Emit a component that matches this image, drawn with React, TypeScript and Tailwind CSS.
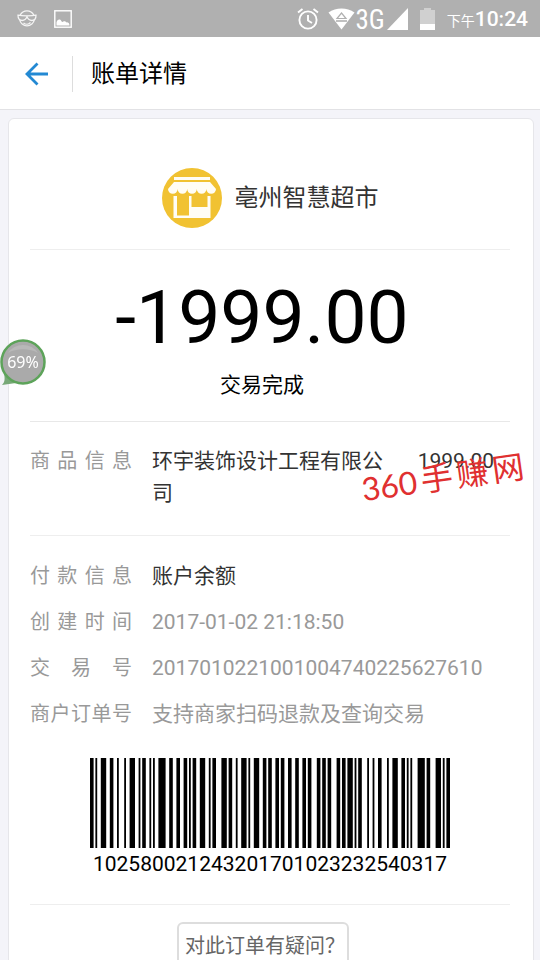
import type { ReactNode } from "react";

// Code 128 (set C) symbols: start, 15 digit pairs, checksum, stop.
// Every digit is the width of a bar or a space, in turn.
const BARCODE_SYMBOLS = [
  "211232",
  "221312",
  "321122",
  "111242",
  "222221",
  "112232",
  "112331",
  "221231",
  "123221",
  "222122",
  "222221",
  "232121",
  "232121",
  "311123",
  "121223",
  "123221",
  "111341",
  "2331112",
];

type DetailRowProps = {
  label: string;
  children: ReactNode;
  strong?: boolean;
};

function DetailRow({ label, children, strong = false }: DetailRowProps) {
  return (
    <div className="flex gap-5 text-[21px] leading-8">
      <dt className="w-[102px] shrink-0 text-xl leading-8 text-[#999999] [text-align-last:justify]">{label}</dt>
      <dd className={`flex min-w-0 flex-1 ${strong ? "text-[#333333]" : "text-[#999999]"}`}>{children}</dd>
    </div>
  );
}

function Barcode() {
  let x = 0;
  const bars: { x: number; width: number }[] = [];
  BARCODE_SYMBOLS.join("")
    .split("")
    .forEach((digit, i) => {
      const width = Number(digit);
      if (i % 2 === 0) bars.push({ x, width });
      x += width;
    });

  return (
    <svg className="h-[90px] w-[360px]" viewBox={`0 0 ${x} 90`} preserveAspectRatio="none" role="img" aria-label="条形码">
      {bars.map((bar) => (
        <rect key={bar.x} x={bar.x} y="0" width={bar.width} height="90" fill="#000" />
      ))}
    </svg>
  );
}

function StoreIcon() {
  return (
    <svg className="size-[60px]" viewBox="0 0 60 60" aria-hidden="true">
      <circle cx="30" cy="30" r="30" fill="#f1c232" />
      <g fill="#fffdf5">
        <rect x="12" y="9" width="36" height="3" />
        <path d="M12 14h36l6 7a4.800 4.800 0 0 1-9.600 0a4.800 4.800 0 0 1-9.600 0a4.800 4.800 0 0 1-9.600 0a4.800 4.800 0 0 1-9.600 0a4.800 4.800 0 0 1-9.600 0z" />
        <path d="M11.500 28h3.500v19.500h12V28h2.500v11h16V28h3v22h-37z" />
      </g>
    </svg>
  );
}

function StatusBar() {
  return (
    <div className="flex h-[37px] shrink-0 items-center bg-[#b0b0b0] pr-3 pl-[17px] text-white">
      <svg className="size-5" viewBox="0 0 20 20" fill="none" stroke="#f4f4f4" strokeWidth="1.300" aria-hidden="true">
        <path d="M3.200 6a7.600 7.600 0 0 1 13.600 0M2.600 10.500a7.500 7.500 0 0 0 14.800 0" />
        <path d="M1 6.200c3 .6 5.500.6 9 .6s6 0 9-.6c0 3.500-1.300 5.300-4.200 5.300S11 10.200 10 7.800C9 10.200 8.100 11.500 5.200 11.500S1 9.700 1 6.200z" />
        <path d="M6.500 14c2.200 1.700 5.300 1.500 7-.5" />
      </svg>
      <svg className="ml-[17px] size-[18px]" viewBox="0 0 18 18" aria-hidden="true">
        <rect x=".8" y=".8" width="16.400" height="16.400" fill="none" stroke="#fff" strokeWidth="1.400" />
        <path d="M2.500 15.500V12.500c.5-3 3.500-4 4.800-1.500.5 1 1.400 1.200 2 .6 1.200-.9 2.400-.4 2.900.8 1.600-.3 3.300.4 3.300 3.100z" fill="#fff" />
      </svg>

      <div className="ml-auto flex items-center">
        <svg className="size-[22px]" viewBox="0 0 22 22" fill="none" stroke="#fff" strokeWidth="1.900" aria-hidden="true">
          <circle cx="11" cy="12" r="8.600" />
          <path d="M11 7v5.500l4 2.500M1 4.500 5.500 1M21 4.500 16.500 1" />
        </svg>
        <svg className="ml-[9px] h-[22px] w-[27px]" viewBox="0 0 27 22" aria-hidden="true">
          <path d="M.5 4.500C8-.8 19-.8 26.500 4.500L13.500 21.500z" fill="#fff" />
          <path d="M13.500 5 18 10.500H9z" fill="#fff" stroke="#b0b0b0" strokeWidth="1.200" />
          <path d="M8 13h11" stroke="#b0b0b0" strokeWidth="1.600" />
        </svg>
        <span className="pt-0.5 font-['Roboto_Condensed',Roboto,sans-serif] text-[27px] leading-9">3G</span>
        <svg className="ml-0.5 h-[22px] w-[21px]" viewBox="0 0 21 22" aria-hidden="true">
          <path d="M21 0v22H0z" fill="#fff" />
        </svg>
        <svg className="ml-3 h-[22px] w-[15px]" viewBox="0 0 15 22" aria-hidden="true">
          <path d="M0 2h4V0h7v2h4v20H0z" fill="#d0d0d0" />
          <path d="M0 16h15v6H0z" fill="#fff" />
        </svg>
        <span className="mt-1 ml-3 text-sm leading-9">下午</span>
        <span className="text-[21px] leading-9 font-medium">10:24</span>
      </div>
    </div>
  );
}

export default function App() {
  return (
    <div className="flex h-screen flex-col bg-[#f4f4f9] font-[Roboto,'Noto_Sans_CJK_SC',sans-serif] text-[#333333]">
      <StatusBar />

      <header className="flex h-[73px] shrink-0 items-center border-b border-[#e2e2e5] bg-white pt-px pl-6">
        <button type="button" aria-label="返回" className="flex w-6 justify-center">
          <svg className="size-6" viewBox="0 0 24 24" fill="none" stroke="#2389d3" strokeWidth="2.800" aria-hidden="true">
            <path d="M24 12H3M13.500 1.500 3 12l10.500 10.500" />
          </svg>
        </button>
        <span className="ml-6 h-9 w-px bg-[#dddddd]" />
        <h1 className="ml-[18px] text-2xl text-black">账单详情</h1>
      </header>

      <main className="min-h-0 flex-1 overflow-y-auto pt-2 pr-1.5 pl-2 [scrollbar-width:none]">
        <div className="relative rounded-t-md border border-[#e6e6ea] bg-white pr-[23px] pl-[21px]">
          <div className="flex h-[131px] items-end justify-center gap-[13px] border-b border-[#eeeeee] pb-[21px]">
            <StoreIcon />
            <h2 className="text-2xl leading-[60px]">亳州智慧超市</h2>
          </div>

          <div className="border-b border-[#e8e8e8] pt-[25px] pb-5 text-center text-black">
            <p className="pr-4 text-[75px] leading-[84px]">-1999.00</p>
            <p className="pt-2.5 pr-4 text-[21px] leading-8">交易完成</p>
          </div>

          <dl className="border-b border-[#eeeeee] pt-[23px] pb-[26px]">
            <DetailRow label="商品信息" strong>
              <span className="w-60 pr-2">环宇装饰设计工程有限公司</span>
              <span className="ml-auto pr-4">1999.00</span>
            </DetailRow>
          </dl>

          <dl className="flex flex-col gap-3.5 pt-6">
            <DetailRow label="付款信息" strong>
              账户余额
            </DetailRow>
            <DetailRow label="创建时间">2017-01-02 21:18:50</DetailRow>
            <DetailRow label="交易号">2017010221001004740225627610</DetailRow>
            <DetailRow label="商户订单号">支持商家扫码退款及查询交易</DetailRow>
          </dl>

          <div className="flex flex-col items-center border-b border-[#eeeeee] pt-7 pb-6 text-black">
            <Barcode />
            <p className="text-[21px] leading-8">102580021243201701023232540317</p>
          </div>

          <div className="flex justify-center py-[17px] pr-3.5">
            <button
              type="button"
              className="h-12 w-[172px] rounded-md border-2 border-[#dddddd] pl-1.5 text-left text-xl whitespace-nowrap text-[#666666]"
            >
              对此订单有疑问？
            </button>
          </div>

          <div className="absolute top-[341px] right-2 flex -rotate-8 items-center gap-1 text-[#e03030]">
            <span className="font-[Lato,sans-serif] text-[32px] leading-9">360</span>
            <span className="flex gap-1 text-[32px] leading-9">
              <span>手</span>
              <span>赚</span>
              <span>网</span>
            </span>
          </div>
        </div>
      </main>

      <div className="fixed top-[339px] left-0 flex size-[46px] items-center justify-center">
        <svg className="absolute inset-0 size-[46px]" viewBox="0 0 46 46" aria-hidden="true">
          <path d="M2 46c3-3 3-6 2-12l12 10z" fill="#77a877" />
          <circle cx="23" cy="23" r="21.500" fill="#aaaaaa" stroke="#5da35a" strokeWidth="2.500" />
          <path d="M8 14a18 18 0 0 1 30 0c-8-5-22-5-30 0z" fill="#b8b8b8" />
        </svg>
        <span className="relative font-['Noto_Sans',sans-serif] text-base text-white">69%</span>
      </div>
    </div>
  );
}
